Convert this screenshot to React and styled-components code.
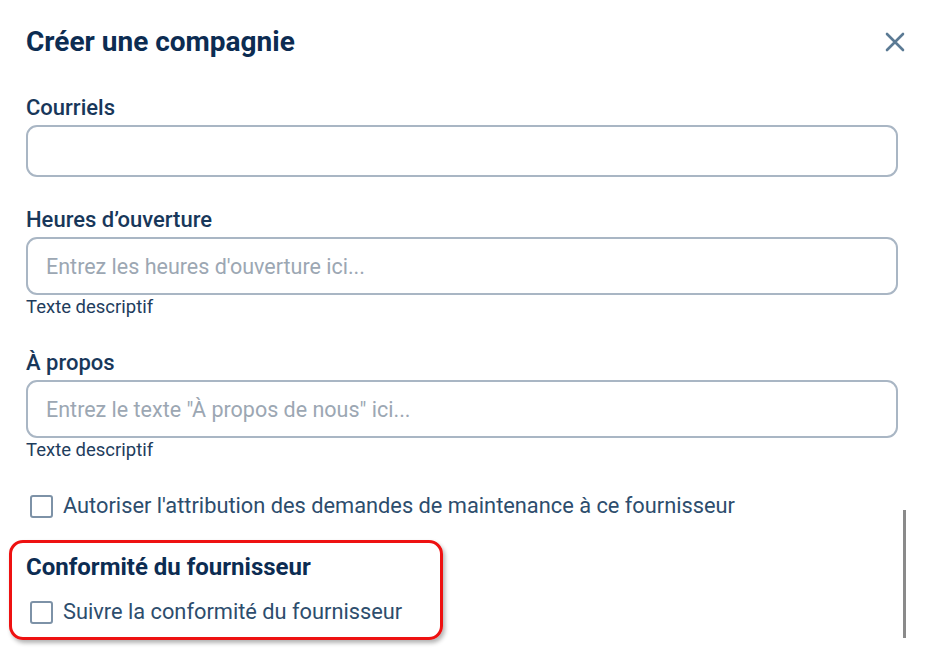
import styled, { createGlobalStyle } from "styled-components";

const GlobalStyle = createGlobalStyle`
  body {
    margin: 0;
    background: #ffffff;
    font-family: Roboto, "Liberation Sans", sans-serif;
  }
`;

const Modal = styled.div`
  position: relative;
  width: 940px;
  height: 653px;
  box-sizing: border-box;
  padding: 22px 42px 0 26px;
  overflow: hidden;
  background: #fff;
`;

const Header = styled.div`
  display: flex;
  align-items: center;
  justify-content: space-between;
  margin-right: -7px;
`;

const Title = styled.h1`
  margin: 0;
  font-size: 28px;
  line-height: 40px;
  font-weight: 700;
  color: #0c2c52;
`;

const CloseButton = styled.button`
  display: flex;
  padding: 0;
  border: none;
  background: none;
  cursor: pointer;
`;

const Field = styled.div`
  display: flex;
  flex-direction: column;
  margin-top: ${(p) => p.gap || 30}px;
`;

const Label = styled.label`
  font-size: 22px;
  line-height: 26px;
  font-weight: 500;
  color: #18375a;
  margin-bottom: 4px;
`;

const Input = styled.input`
  box-sizing: border-box;
  width: 100%;
  height: ${(p) => p.h || 58}px;
  border: 2px solid #a9b6c4;
  border-radius: 11px;
  padding: 0 18px;
  font-family: inherit;
  font-size: 21.5px;
  color: #2d4d6d;
  outline: none;
  &::placeholder {
    color: #9ca7b3;
  }
`;

const Helper = styled.span`
  font-size: 18.5px;
  line-height: 21px;
  color: #1e3c5c;
  margin-top: 2px;
`;

const CheckRow = styled.label`
  display: flex;
  align-items: center;
  gap: 10px;
  padding-left: 4px;
  margin-top: ${(p) => p.gap || 0}px;
  font-size: 21.8px;
  line-height: 28px;
  color: #2d4d6d;
  cursor: pointer;
`;

const Box = styled.span`
  box-sizing: border-box;
  width: 23px;
  height: 23px;
  border: 2px solid #7d92a7;
  border-radius: 3px;
  flex-shrink: 0;
`;

const Highlight = styled.section`
  box-sizing: border-box;
  width: 434px;
  margin: 20px 0 0 -17px;
  padding: 9px 0 11px 14px;
  border: 3px solid #ee1111;
  border-radius: 14px;
  box-shadow: 2px 3px 4px rgba(0, 0, 0, 0.3);
`;

const SectionTitle = styled.h2`
  margin: 0;
  font-size: 24px;
  line-height: 30px;
  font-weight: 700;
  color: #0c2c52;
`;

const Scrollbar = styled.div`
  position: absolute;
  left: 903px;
  top: 510px;
  width: 3px;
  height: 128px;
  background: #8a8a8a;
`;

export default function App() {
  return (
    <>
      <GlobalStyle />
      <Modal>
        <Header>
          <Title>Créer une compagnie</Title>
          <CloseButton aria-label="Fermer">
            <svg width="20" height="20" viewBox="0 0 20 20">
              <path
                d="M2 2 L18 18 M18 2 L2 18"
                stroke="#5b7a94"
                strokeWidth="2.6"
                strokeLinecap="round"
              />
            </svg>
          </CloseButton>
        </Header>

        <Field gap={33}>
          <Label>Courriels</Label>
          <Input h={52} />
        </Field>

        <Field gap={30}>
          <Label>Heures d’ouverture</Label>
          <Input placeholder="Entrez les heures d'ouverture ici..." />
          <Helper>Texte descriptif</Helper>
        </Field>

        <Field gap={32}>
          <Label>À propos</Label>
          <Input placeholder={'Entrez le texte "À propos de nous" ici...'} />
          <Helper>Texte descriptif</Helper>
        </Field>

        <CheckRow gap={31}>
          <Box />
          Autoriser l'attribution des demandes de maintenance à ce fournisseur
        </CheckRow>

        <Highlight>
          <SectionTitle>Conformité du fournisseur</SectionTitle>
          <CheckRow gap={16}>
            <Box />
            Suivre la conformité du fournisseur
          </CheckRow>
        </Highlight>

        <Scrollbar />
      </Modal>
    </>
  );
}
